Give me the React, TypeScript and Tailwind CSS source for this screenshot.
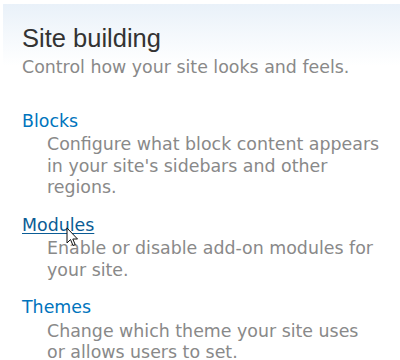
import React from "react";

const items = [
  {
    title: "Blocks",
    lines: ["Configure what block content appears", "in your site's sidebars and other", "regions."],
    hover: false,
  },
  {
    title: "Modules",
    lines: ["Enable or disable add-on modules for", "your site."],
    hover: true,
  },
  {
    title: "Themes",
    lines: ["Change which theme your site uses", "or allows users to set."],
    hover: false,
  },
];

export default function App() {
  return (
    <div className="relative w-[400px] h-[360px] overflow-hidden bg-white pt-[4px] pl-[3px]">
      <div className="h-full bg-[linear-gradient(to_bottom,#e9f1f9_0px,#f4f8fc_30px,#ffffff_62px)] pl-[19px] pt-[19px]">
        <h2 className="m-0 text-[25.5px] leading-[30px] font-normal text-[#333333] font-['Liberation_Sans',Arial,sans-serif]">
          Site building
        </h2>
        <p className="mt-[4px] text-[17.4px] leading-[21.5px] text-[#898989] font-['DejaVu_Sans',Verdana,sans-serif]">
          Control how your site looks and feels.
        </p>
        <dl className="mt-[32px] flex flex-col gap-[16px] font-['DejaVu_Sans',Verdana,sans-serif] text-[17.4px] leading-[21.5px]">
          {items.map((it) => (
            <div key={it.title}>
              <dt>
                <a
                  href="#"
                  className={
                    it.hover
                      ? "text-[#0b5c95] underline underline-offset-[2px] decoration-1"
                      : "text-[#0074bd] no-underline"
                  }
                >
                  {it.title}
                </a>
              </dt>
              <dd className="mt-[2px] ml-[25px] text-[#898989]">
                {it.lines.map((l) => (
                  <span key={l} className="block whitespace-nowrap">
                    {l}
                  </span>
                ))}
              </dd>
            </div>
          ))}
        </dl>
      </div>
      <svg
        className="absolute left-[66px] top-[227px]"
        width="13"
        height="20"
        viewBox="0 0 13 20"
      >
        <path
          d="M1 1 L1 16 L4.5 12.5 L7 18.5 L9.2 17.6 L6.8 12 L11.5 12 Z"
          fill="#ffffff"
          stroke="#111111"
          strokeWidth="1"
          strokeLinejoin="miter"
        />
      </svg>
    </div>
  );
}
